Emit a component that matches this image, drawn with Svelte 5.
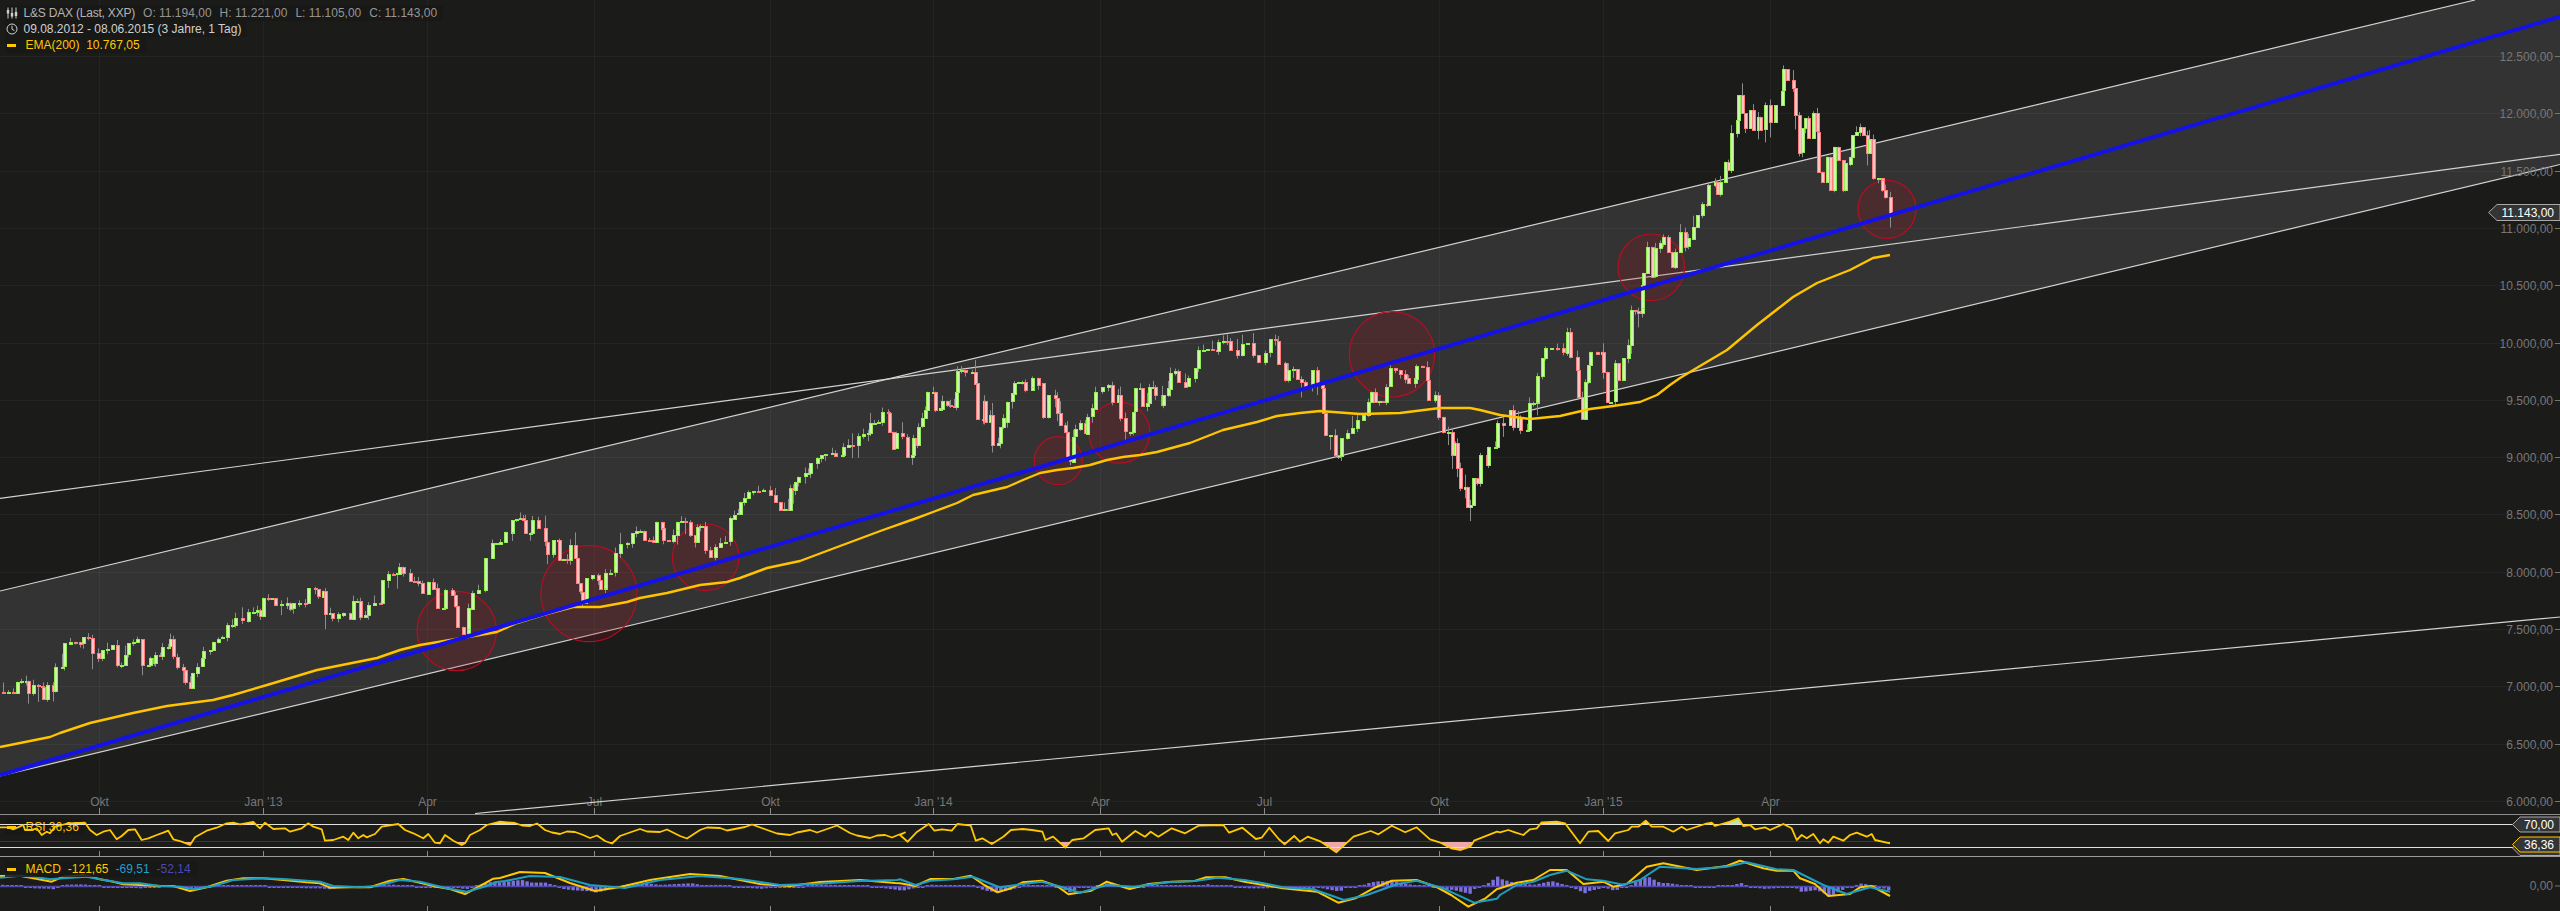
<script>
	// keypoints were read from crops of the chart: [x, y, x, y...] in crop pixels
	const crop = (flat, ox, oy, sx = 3, sy = 3) => {
		const out = [];
		for (let i = 0; i < flat.length; i += 2) out.push([ox + flat[i] / sx, oy + flat[i + 1] / sy]);
		return out;
	};

	const closes = [
		...crop([0,425,10,428,40,428,50,395,78,392,85,428,100,405,125,412,128,448,140,405,160,422,165,350,185,350,192,280,210,275,240,280,250,262,265,265,275,310,295,325,305,300,335,285,350,345,362,345,385,280,410,268,425,345,445,345,450,325,462,340,465,315,480,318,485,292,505,290,510,268,520,320,530,350,548,360,555,395,570,412,575,368,590,350,605,325,610,303,630,300,640,275,665,262,680,225,695,225,705,205,725,212,745,185,770,180,780,198,790,143,815,145,825,165,860,158,870,175,880,160,915,160,925,115,945,118,955,140,970,122,975,192,990,190,995,205,1030,188,1050,205,1060,152,1070,152,1080,200,1095,195,1105,165,1140,158,1145,90,1165,72,1190,70,1198,50,1210,68,1230,92,1255,100], 0, 550),
		...crop([65,280,85,245,100,265,110,325,130,325,135,270,155,285,165,318,170,380,190,400,205,388,205,325,215,278,235,270,255,175,275,130,300,125,315,95,335,95,335,60,360,55,370,60,375,100,390,100,395,60,415,85,435,125,440,160,460,160,460,120,475,120,478,180,500,180,510,135,525,175,530,250,540,275,545,305,555,305,558,235,575,225,595,240,600,268,615,265,610,220,630,218,645,160,660,133,680,130,695,100,720,92,732,120,760,125,768,65,785,85,790,120,805,122,830,90,830,65,855,65,870,105,885,125,890,80,912,78,915,150,930,170,945,140,975,125,990,55,1015,40,1020,5,1045,-25,1090,-30,1110,-15,1140,30,1165,32], 400, 500),
		...crop([0,475,10,480,15,455,25,440,45,430,55,430,60,400,80,385,105,372,125,370,135,378,155,375,160,350,185,345,205,318,235,310,240,280,265,275,275,245,295,248,298,305,310,355,318,310,335,320,350,380,365,375,370,325,380,345,385,290,395,265,405,240,412,185,430,185,435,240,450,235,455,212,470,225,492,230,498,185,502,122,525,125,545,125,555,160,560,268,580,272,582,212,585,275,600,255,605,345,625,340,630,292,640,265,650,275,652,215,665,190,672,158,695,155,705,178,725,170,725,143,745,165,760,160,760,262,775,195,795,205,800,250,810,285,825,305,830,385,840,395,848,320,855,298,870,280,885,310,890,260,905,235,915,185,935,172,955,165,965,215,985,195,990,265,1005,305,1020,305,1030,245,1035,175,1050,175,1055,230,1070,220,1078,172,1090,170,1095,195,1115,225,1120,195,1135,175,1140,128,1155,122,1165,155,1185,170,1195,145,1215,115,1225,60,1250,58,1280,62,1285,35,1310,32,1320,60,1340,75,1355,42,1370,40,1390,75,1405,95,1425,68,1440,28,1455,32,1465,100,1485,150,1495,120,1510,118,1520,148], 790, 330),
		...crop([75,260,95,210,110,255,125,265,128,340,135,405,150,405,165,465,175,470,183,415,200,400,215,385,230,360,250,345,265,305,272,275,285,305,310,305,318,260,330,205,345,210,375,235,385,250,405,235,408,197,425,200,440,240,445,300,465,285,475,350,490,395,505,395,515,465,525,430,530,505,540,565,555,560,560,620,570,615,578,535,590,550,600,465,620,495,625,440,645,440,650,368,670,375,690,330,700,380,715,350,720,390,740,390,748,310,770,305,772,228,785,175,795,145,830,145,850,158,860,95,870,170,890,210,895,290,905,355,915,245,925,195,930,155,950,160,965,155,970,215,980,305,990,305,1005,265,1003,190,1015,240,1030,175,1045,135,1052,30,1075,38,1085,0], 1280, 300),
		...crop([125,775,125,705,130,668,140,590,155,680,165,595,180,580,190,560,205,605,215,650,225,605,240,545,255,590,265,565,290,495,305,462,320,465,325,405,345,395,352,430,360,395,375,335,385,360,392,250,410,210,415,135,425,190,435,235,450,180,460,240,475,200,480,238,495,165,510,215,525,165,545,122,550,58,560,90,580,115,585,195,598,308,605,235,615,205,625,265,640,190,650,245,655,365,665,395,680,320,690,420,702,290,715,330,730,420,735,340,750,320,757,255,780,232,790,255,800,310,808,268,820,385,845,390,840,420,855,440,870,488], 1600, 50)
	];

	let seed = 42;
	const rnd = () => {
		seed = (seed * 16807) % 2147483647;
		return seed / 2147483647;
	};

	function buildCandles(pts) {
		const out = [];
		let [px, py] = pts[0];
		let open = py;
		for (const [kx, ky] of pts.slice(1)) {
			const x1 = Math.max(kx, px);
			const n = Math.max(1, Math.round((x1 - px) / 4.8));
			for (let j = 1; j <= n; j++) {
				const jitter = j < n ? (rnd() - 0.5) * 2.5 : 0;
				const close = py + ((ky - py) * j) / n + jitter;
				const r = rnd();
				const wick = r < 0.1 ? 5 + rnd() * 8 : r < 0.65 ? 1 + rnd() * 5 : 0;
				const r2 = rnd();
				const tail = r2 < 0.12 ? 5 + rnd() * 11 : r2 < 0.6 ? 1 + rnd() * 4 : 0;
				out.push({
					x: Math.round(px + ((x1 - px) * j) / n),
					top: Math.round(Math.min(open, close)),
					h: Math.max(1, Math.round(Math.abs(close - open))),
					hi: Math.min(open, close) - wick,
					lo: Math.max(open, close) + tail,
					up: close <= open
				});
				open = close;
			}
			px = x1;
			py = ky;
		}
		return out;
	}

	const candles = buildCandles(closes);

	const ema = [[0,747],[50,737],[60,733],[90,723],[133,713],[167,706],[190,703],[213,700],[233,695],[267,685],[317,670],[377,658],[400,650],[420,645],[450,640],[480,635],[497,632],[517,623],[543,615],[573,607],[600,607],[627,602],[640,598],[667,593],[700,585],[727,582],[740,578],[767,568],[800,561],[840,546],[883,530],[917,518],[933,512],[957,503],[973,495],[990,491],[1007,487],[1023,480],[1040,473],[1057,470],[1073,468],[1090,465],[1107,460],[1123,457],[1140,455],[1157,452],[1190,443],[1223,430],[1257,422],[1277,416],[1300,413],[1320,411],[1360,414],[1400,413],[1440,408],[1470,408],[1480,410],[1500,415],[1530,419],[1560,416],[1590,409],[1613,406],[1640,402],[1657,395],[1670,385],[1680,378],[1700,366],[1727,350],[1757,325],[1793,297],[1817,283],[1850,270],[1873,258],[1890,255]];

	const rsiMid = [[515,823],[530,826],[545,830],[560,834],[575,832],[590,838],[605,841],[620,836],[640,829],[660,832],[680,836],[700,830],[720,828],[745,827],[770,831],[790,835],[810,830],[830,828],[850,833],[870,838],[885,835],[898,835]];
	const rsi = [
		...crop([0,142,25,142,40,148,70,135,75,150,95,150,110,145,125,165,140,155,150,160,165,140,185,135,205,130,255,128,270,150,290,165,310,155,330,150,350,178,365,168,385,150,405,148,425,180,445,175,470,165,490,158,505,152,520,178,545,185,570,195,585,172,620,152,650,143,680,130,700,128,720,133,760,126,780,145,795,128,820,147,855,145,870,155,905,145,925,130,940,140,965,148,975,182,1000,180,1030,170,1045,180,1060,158,1075,175,1090,165,1100,172,1125,162,1145,140,1195,132,1215,150,1240,160,1270,175,1285,162,1305,188,1320,190,1335,165,1360,182,1385,195,1395,190,1410,165,1440,150,1460,135,1500,125], 0, 780),
		...rsiMid.flatMap(([x, y], i) => [[x, y], [x + 7, y + (i % 2 ? -2.5 : 2.5)]]),
		...crop([0,165,20,185,45,155,75,132,90,152,110,148,135,152,150,132,185,137,198,182,215,175,240,192,270,170,290,150,320,147,345,150,372,155,380,180,400,170,432,203,450,180,480,175,510,150,545,145,555,165,565,160,580,185,615,153,640,170,655,155,675,170,710,145,745,160,780,137,845,135,860,158,895,143,930,177,945,173,965,143,990,178,1005,193,1030,168,1045,185,1065,170,1100,185,1140,217,1185,170,1230,153,1250,163,1285,137,1320,157,1350,142,1385,178,1410,187,1440,205,1465,210,1490,200,1500,182,1560,155], 900, 780, 2.613),
		...crop([0,157,25,150,45,157,70,165,90,148,110,145,125,127,170,125,195,130,240,190,265,155,295,153,325,183,345,160,385,150,395,140,415,140,437,122,455,140,490,140,520,155,545,140,560,150,615,132,635,128,645,138,690,125,715,115,730,138,750,135,765,148,795,142,810,150,850,132,875,145,890,180,905,165,920,175,940,162,960,190,970,178,985,188,1000,170,1030,182,1050,165,1070,158,1100,170,1115,162,1125,180,1170,190], 1500, 780)
	];

	const macdLine = [
		...crop([0,288,60,287,100,295,155,305,190,290,250,285,300,298,340,305,370,313,420,315,480,318,520,318,570,333,620,322,680,302,730,295,790,295,850,300,920,307,960,310,990,323,1050,322,1110,322,1170,302,1210,297,1260,308,1310,320,1350,327,1395,342,1440,318,1480,296], 0, 780),
		[500,878],[520,872],[545,873],[570,883],[595,891],[620,887],[650,880],[690,874],[720,876],[760,884],[790,886],[820,882],[860,880],[895,883],
		...crop([0,310,40,318,80,297,140,297,185,287,220,315,255,337,290,325,320,307,370,302,410,318,440,343,500,332,540,305,600,327,650,312,710,305,770,303,800,292,850,292,900,305,950,315,1000,325,1090,335,1145,368,1190,355,1240,323,1285,302,1350,300,1400,320,1440,345,1485,380,1530,355,1560,327], 900, 780, 2.613),
		...crop([0,325,50,308,100,300,150,270,200,270,250,312,310,305,340,320,380,312,440,260,490,250,590,270,680,258,720,242,790,265,830,272,880,272,900,295,945,312,985,348,1050,342,1080,322,1115,318,1170,348], 1500, 780)
	];
	const macdSignal = [
		...crop([0,293,60,287,100,290,150,298,190,295,260,290,300,298,370,310,420,310,480,318,540,320,580,328,640,318,700,300,790,295,850,297,960,305,1000,318,1080,322,1130,318,1200,300,1260,305,1340,325,1400,335,1460,318,1490,306], 0, 780),
		[505,881],[530,876],[560,877],[590,885],[625,888],[660,880],[700,876],[740,879],[780,885],[815,884],[860,881],[897,880],
		...crop([0,298,40,315,80,302,140,298,190,290,260,322,320,312,370,305,420,320,470,338,540,315,610,320,700,307,770,303,830,293,900,300,950,310,1000,322,1080,328,1160,360,1220,345,1300,312,1350,302,1420,325,1500,368,1560,356], 900, 780, 2.613),
		...crop([0,345,50,315,100,305,150,285,200,272,260,298,310,302,370,314,420,300,480,260,590,267,680,260,740,247,830,268,880,270,970,315,1040,342,1110,322,1170,335], 1500, 780)
	];

	const at = (pts, x) => {
		for (let i = 1; i < pts.length; i++) {
			if (pts[i][0] >= x) {
				const [x0, y0] = pts[i - 1];
				const [x1, y1] = pts[i];
				return y0 + ((y1 - y0) * (x - x0)) / (x1 - x0 || 1);
			}
		}
		return pts[pts.length - 1][1];
	};

	const macdBase = 886.5;
	const histogram = [];
	for (let x = 1; x < 1890; x += 4.6) {
		const v = (at(macdSignal, x) - at(macdLine, x)) * 1.1;
		const h = Math.max(Math.abs(v), 1.5);
		histogram.push({ x, y: v > 0 ? macdBase - h : macdBase, h });
	}

	const line = (pts) => pts.map(([x, y]) => `${x.toFixed(1)},${y.toFixed(1)}`).join(' ');
	const rsiLow = line([[0, 841.7], ...rsi, [1890, 841.7]]);
	const rsiHigh = line([[0, 824.3], ...rsi, [1890, 824.3]]);

	const priceTicks = [];
	for (let i = 0; i <= 13; i++) {
		const p = 12500 - i * 500;
		const head = Math.floor(p / 1000);
		const tail = String(p % 1000).padStart(3, '0');
		priceTicks.push({ y: Math.round(56 + i * 57.31) + 0.5, label: `${head}.${tail},00` });
	}

	const months = [
		{ x: 99.5, label: 'Okt' },
		{ x: 263.5, label: "Jan '13" },
		{ x: 427.5, label: 'Apr' },
		{ x: 594.5, label: 'Jul' },
		{ x: 770.5, label: 'Okt' },
		{ x: 933.5, label: "Jan '14" },
		{ x: 1100.5, label: 'Apr' },
		{ x: 1264.5, label: 'Jul' },
		{ x: 1439.5, label: 'Okt' },
		{ x: 1603.5, label: "Jan '15" },
		{ x: 1770.5, label: 'Apr' }
	];

	const circles = [
		[456.7, 631, 39.7],
		[589, 593.7, 48],
		[705.7, 557.3, 33.3],
		[1058.3, 460.7, 24],
		[1119.3, 432.7, 30.5],
		[1392, 354.3, 42.7],
		[1651.3, 267.3, 33.3],
		[1887, 209.3, 29]
	];
</script>

<div class="chart">
	<section class="pane main">
		<svg class="plot" viewBox="0 0 2560 814" width="2560" height="814">
			<polygon class="channel" points="0,591 2475,0 2560,0 2560,164.5 0,776" />
			{#each priceTicks as t}
				<line class="grid" x1="0" x2="2560" y1={t.y} y2={t.y} />
			{/each}
			{#each months as m}
				<line class="grid" x1={m.x} x2={m.x} y1="0" y2="808" />
				<line class="tick" x1={m.x} x2={m.x} y1="808" y2="814" />
				<text class="axis" x={m.x} y="806" text-anchor="middle">{m.label}</text>
			{/each}
			<line class="trend" x1="0" y1="591" x2="2475" y2="0" />
			<line class="trend" x1="0" y1="776" x2="2560" y2="164.5" />
			<line class="trend" x1="0" y1="498.4" x2="2560" y2="154.3" />
			<line class="trend" x1="475" y1="813.5" x2="2560" y2="617" />
			{#each circles as [cx, cy, r]}
				<circle class="mark" {cx} {cy} {r} />
			{/each}
			{#each candles as c}
				<line class="wick" x1={c.x + 0.5} x2={c.x + 0.5} y1={c.hi} y2={c.lo} />
			{/each}
			{#each candles as c}
				<rect class={c.up ? 'up' : 'down'} x={c.x - 1} y={c.top + 0.5} width="3" height={c.h} />
			{/each}
			<polyline class="ema" points={line(ema)} />
			<line class="regression" x1="0" y1="775" x2="2560" y2="16.7" />
			{#each priceTicks as t}
				<text class="axis" x="2553" y={t.y + 4} text-anchor="end">{t.label}</text>
				<line class="dash" x1="2555" x2="2560" y1={t.y} y2={t.y} />
			{/each}
			<polygon class="tag" points="2560,204.5 2497,204.5 2488.5,212.5 2497,220.5 2560,220.5" />
			<text class="tag-text" x="2554" y="216.5" text-anchor="end">11.143,00</text>
		</svg>

		<div class="legend">
			<div class="legend-row quote">
				<svg class="glyph" viewBox="0 0 12 12" width="12" height="12">
					<path d="M2 0.5V11.5M6 0.5V11.5M10 0.5V11.5" />
					<rect x="0.8" y="3" width="2.4" height="3.5" />
					<rect x="4.8" y="6" width="2.4" height="3.5" />
					<rect x="8.8" y="5" width="2.4" height="4" />
				</svg>
				<span class="name">L&amp;S DAX (Last, XXP)</span>
				<span>O: 11.194,00</span>
				<span>H: 11.221,00</span>
				<span>L: 11.105,00</span>
				<span>C: 11.143,00</span>
			</div>
			<div class="legend-row period">
				<svg class="glyph" viewBox="0 0 12 12" width="12" height="12">
					<circle cx="6" cy="6" r="5" />
					<path d="M6 2.8V6.3L8.4 7.6" />
				</svg>
				<span>09.08.2012 - 08.06.2015 (3 Jahre, 1 Tag)</span>
			</div>
			<div class="legend-row gold">
				<i class="swatch"></i>
				<span>EMA(200)&nbsp; 10.767,05</span>
			</div>
		</div>
	</section>

	<section class="pane rsi">
		<div class="legend under">
			<div class="legend-row gold">
				<i class="swatch"></i>
				<span>RSI 36,36</span>
			</div>
		</div>
		<svg class="plot" viewBox="0 815 2560 41" width="2560" height="41">
			<defs>
				<clipPath id="oversold"><rect x="0" y="841.7" width="2560" height="20" /></clipPath>
				<clipPath id="overbought"><rect x="0" y="800" width="2560" height="24.3" /></clipPath>
			</defs>
			<polygon class="low-fill" clip-path="url(#oversold)" points={rsiLow} />
			<polygon class="high-fill" clip-path="url(#overbought)" points={rsiHigh} />
			<line class="level" x1="0" x2="2560" y1="824.5" y2="824.5" />
			<line class="level" x1="0" x2="2560" y1="847.5" y2="847.5" />
			{#each months as m}
				<line class="tick" x1={m.x} x2={m.x} y1="851" y2="856" />
			{/each}
			<polyline class="rsi-line" points={line(rsi)} />
			<polygon class="tag" points="2560,840.5 2520,840.5 2512.5,848 2520,855.5 2560,855.5" />
			<polygon class="tag" points="2560,817 2520,817 2512.5,824.5 2520,832 2560,832" />
			<text class="tag-text" x="2554" y="829" text-anchor="end">70,00</text>
			<polygon class="tag live" points="2560,837 2520,837 2512.5,844.5 2520,852 2560,852" />
			<text class="tag-text" x="2554" y="849" text-anchor="end">36,36</text>
		</svg>
	</section>

	<section class="pane macd">
		<svg class="plot" viewBox="0 857 2560 54" width="2560" height="54">
			{#each histogram as b}
				<rect class="bar" x={b.x} y={b.y} width="3.4" height={b.h} />
			{/each}
			<line class="base" x1="0" x2="1890" y1={macdBase} y2={macdBase} />
			<polyline class="macd-line" points={line(macdLine)} />
			<polyline class="signal-line" points={line(macdSignal)} />
			{#each months as m}
				<line class="tick" x1={m.x} x2={m.x} y1="906" y2="911" />
			{/each}
			<text class="axis" x="2553" y="890" text-anchor="end">0,00</text>
			<line class="dash" x1="2555" x2="2560" y1="886" y2="886" />
		</svg>
		<div class="legend">
			<div class="legend-row gold">
				<i class="swatch"></i>
				<span>MACD</span>
				<span>-121,65</span>
				<span class="teal">-69,51</span>
				<span class="violet">-52,14</span>
			</div>
		</div>
	</section>
</div>

<style>
	:global(body) {
		margin: 0;
		background: #1b1b1a;
	}

	.chart {
		width: 2560px;
		height: 911px;
		overflow: hidden;
		display: flex;
		flex-direction: column;
		background: #1b1b1a;
		font-family: 'Liberation Sans', Arial, sans-serif;
		font-size: 12px;
	}

	.pane {
		position: relative;
		flex: none;
	}

	.main {
		height: 814px;
	}

	.rsi {
		height: 41px;
		border-top: 1px solid #8c8c8c;
		border-bottom: 1px solid #9a9a9a;
	}

	.macd {
		height: 54px;
	}

	.plot {
		display: block;
		position: relative;
		z-index: 1;
	}

	.legend {
		position: absolute;
		top: 5px;
		left: 5px;
		z-index: 2;
		display: flex;
		flex-direction: column;
		align-items: flex-start;
	}

	.rsi .legend,
	.macd .legend {
		top: 4px;
	}

	.legend.under {
		z-index: 0;
	}

	.legend-row {
		display: flex;
		align-items: center;
		gap: 7px;
		height: 16px;
		padding-right: 6px;
		line-height: 16px;
		white-space: nowrap;
		background: rgba(24, 24, 24, 0.85);
	}

	.legend-row.quote {
		gap: 8px;
	}

	.glyph {
		flex: none;
		width: 12px;
		height: 12px;
		margin: 0 -1.5px 0 1px;
		fill: none;
		stroke: #d0d0d0;
		stroke-width: 1;
	}

	.quote .glyph {
		margin-right: -2.5px;
	}

	.glyph rect {
		fill: #d0d0d0;
		stroke: none;
	}

	.swatch {
		flex: none;
		width: 9px;
		height: 3px;
		margin: 0 2.5px 0 2px;
		background: #ffc800;
	}

	.quote {
		color: #959595;
	}

	.quote .name {
		color: #b4b4b4;
		letter-spacing: -0.2px;
	}

	.period {
		color: #cfcfcf;
	}

	.gold {
		color: #ffc800;
	}

	.teal {
		color: #1f9fd0;
	}

	.violet {
		color: #4b48b0;
	}

	.channel {
		fill: #333333;
	}

	.grid {
		stroke: rgba(255, 255, 255, 0.04);
		stroke-width: 1;
	}

	.tick {
		stroke: #8a8a8a;
		stroke-width: 1;
	}

	.dash {
		stroke: #777777;
		stroke-width: 1;
	}

	.axis {
		fill: #777777;
		font-size: 12px;
	}

	.trend {
		stroke: #d2d2d2;
		stroke-width: 1.2;
	}

	.regression {
		stroke: #1512e6;
		stroke-width: 4;
	}

	.ema {
		fill: none;
		stroke: #ffc400;
		stroke-width: 2.4;
		stroke-linejoin: round;
	}

	.mark {
		fill: rgba(170, 16, 30, 0.2);
		stroke: #b30f22;
		stroke-width: 1.2;
	}

	.wick {
		stroke: #8c8c8c;
		stroke-width: 1;
	}

	.up {
		fill: #cdf5ad;
		stroke: #94ee52;
		stroke-width: 1;
		shape-rendering: crispEdges;
	}

	.down {
		fill: #ffc4c4;
		stroke: #ff7c7c;
		stroke-width: 1;
		shape-rendering: crispEdges;
	}

	.tag {
		fill: #343434;
		stroke: #a8a8a8;
		stroke-width: 1;
	}

	.tag.live {
		stroke: #ffc800;
	}

	.tag-text {
		fill: #ffffff;
		font-size: 12px;
	}

	.level {
		stroke: #e0e0e0;
		stroke-width: 1;
	}

	.rsi-line,
	.macd-line,
	.signal-line {
		fill: none;
		stroke-linejoin: round;
	}

	.rsi-line {
		stroke: #ffc800;
		stroke-width: 1.8;
	}

	.low-fill {
		fill: #eba9ab;
	}

	.high-fill {
		fill: #b7e6a8;
	}

	.macd-line {
		stroke: #ffc800;
		stroke-width: 2;
	}

	.signal-line {
		stroke: #1f9fbf;
		stroke-width: 2;
	}

	.bar {
		fill: #7b70de;
	}

	.base {
		stroke: #4f47aa;
		stroke-width: 1.4;
	}
</style>
